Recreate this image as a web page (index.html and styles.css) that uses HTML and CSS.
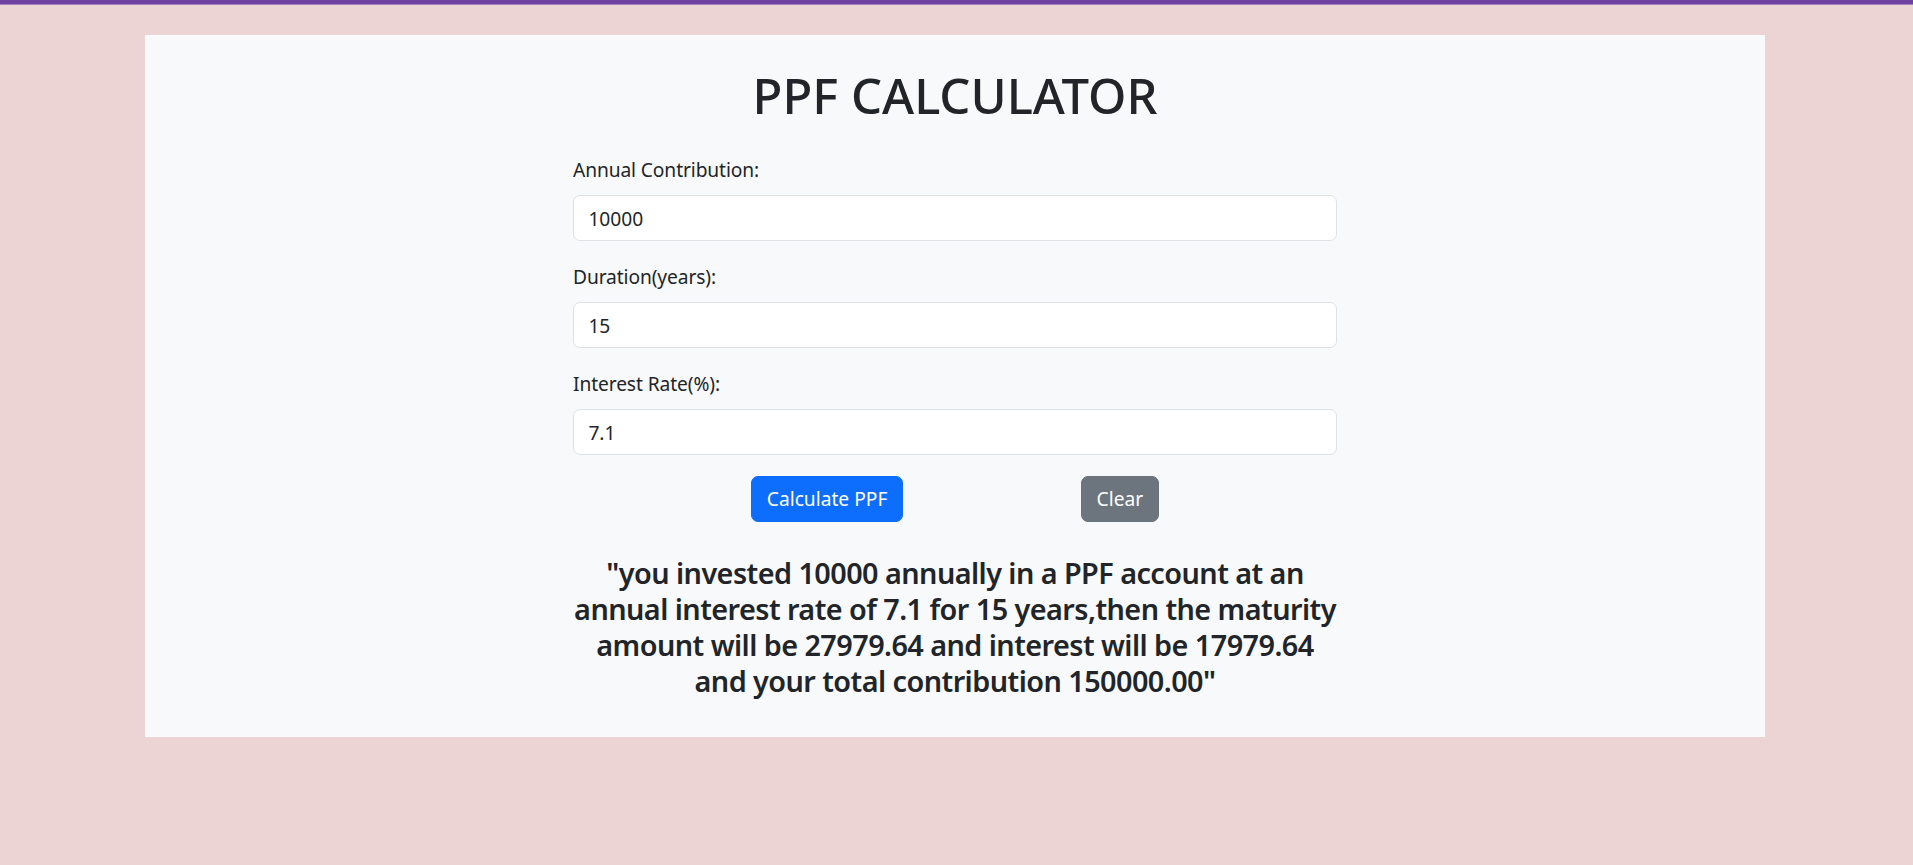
FILE: index.html
```html
<!DOCTYPE html>
<html lang="en">
<head>
<meta charset="utf-8">
<title>PPF Calculator</title>
<link rel="stylesheet" href="styles.css">
</head>
<body>
<div class="topbar"></div>
<main class="card">
  <h1 class="title">PPF CALCULATOR</h1>
  <form class="form">
    <label class="label" for="amt">Annual Contribution:</label>
    <input class="field" id="amt" type="text" value="10000">
    <label class="label" for="dur">Duration(years):</label>
    <input class="field" id="dur" type="text" value="15">
    <label class="label" for="rate">Interest Rate(%):</label>
    <input class="field" id="rate" type="text" value="7.1">
    <div class="actions">
      <button type="button" class="btn btn-primary">Calculate PPF</button>
      <button type="button" class="btn btn-secondary">Clear</button>
    </div>
    <h4 class="result">"you invested 10000 annually in a PPF account at an<br>annual interest rate of 7.1 for 15 years,then the maturity<br>amount will be 27979.64 and interest will be 17979.64<br>and your total contribution 150000.00"</h4>
  </form>
</main>
</body>
</html>
```
FILE: styles.css
```css
* { box-sizing: border-box; }
html, body { margin: 0; padding: 0; }
body {
  background: #ecd4d4;
  font-family: "Noto Sans", "Open Sans", sans-serif;
  color: #212529;
  min-height: 865px;
}
.topbar {
  height: 5px;
  background: #6f42a1;
  border-bottom: 1px solid #a283be;
}
.card {
  width: 1620px;
  margin: 30px 0 0 145px;
  background: #f8f9fa;
  padding: 28.6px 0 38px;
}
.title {
  margin: 0;
  text-align: center;
  font-size: 49px;
  font-weight: 500;
  line-height: 62.4px;
  color: #212529;
}
.form {
  width: 764px;
  margin: 30px auto 0;
  display: flex;
  flex-direction: column;
}
.label {
  display: block;
  font-size: 19.2px;
  line-height: 28.8px;
  margin-bottom: 10.5px;
  color: #212529;
  letter-spacing: -0.1px;
}
.field {
  display: block;
  width: 100%;
  height: 46px;
  padding: 0 14.4px;
  font-family: inherit;
  font-size: 19.2px;
  color: #212529;
  background: #fff;
  border: 1px solid #dee2e6;
  border-radius: 7px;
  margin-bottom: 21.6px;
  outline: none;
}
.actions {
  display: flex;
  justify-content: space-evenly;
  margin-top: -1px;
}
.btn {
  font-family: inherit;
  font-size: 19.2px;
  line-height: 28.8px;
  padding: 8px 14.4px;
  border: 1px solid transparent;
  border-radius: 7px;
  color: #fff;
  cursor: pointer;
}
.btn-primary { background: #0d6efd; border-color: #0d6efd; }
.btn-secondary { background: #6c757d; border-color: #6c757d; }
.result {
  margin: 33px -20px 0;
  text-align: center;
  font-size: 28.8px;
  font-weight: 600;
  line-height: 35.8px;
  letter-spacing: -0.55px;
  white-space: nowrap;
  color: #212529;
}
```
